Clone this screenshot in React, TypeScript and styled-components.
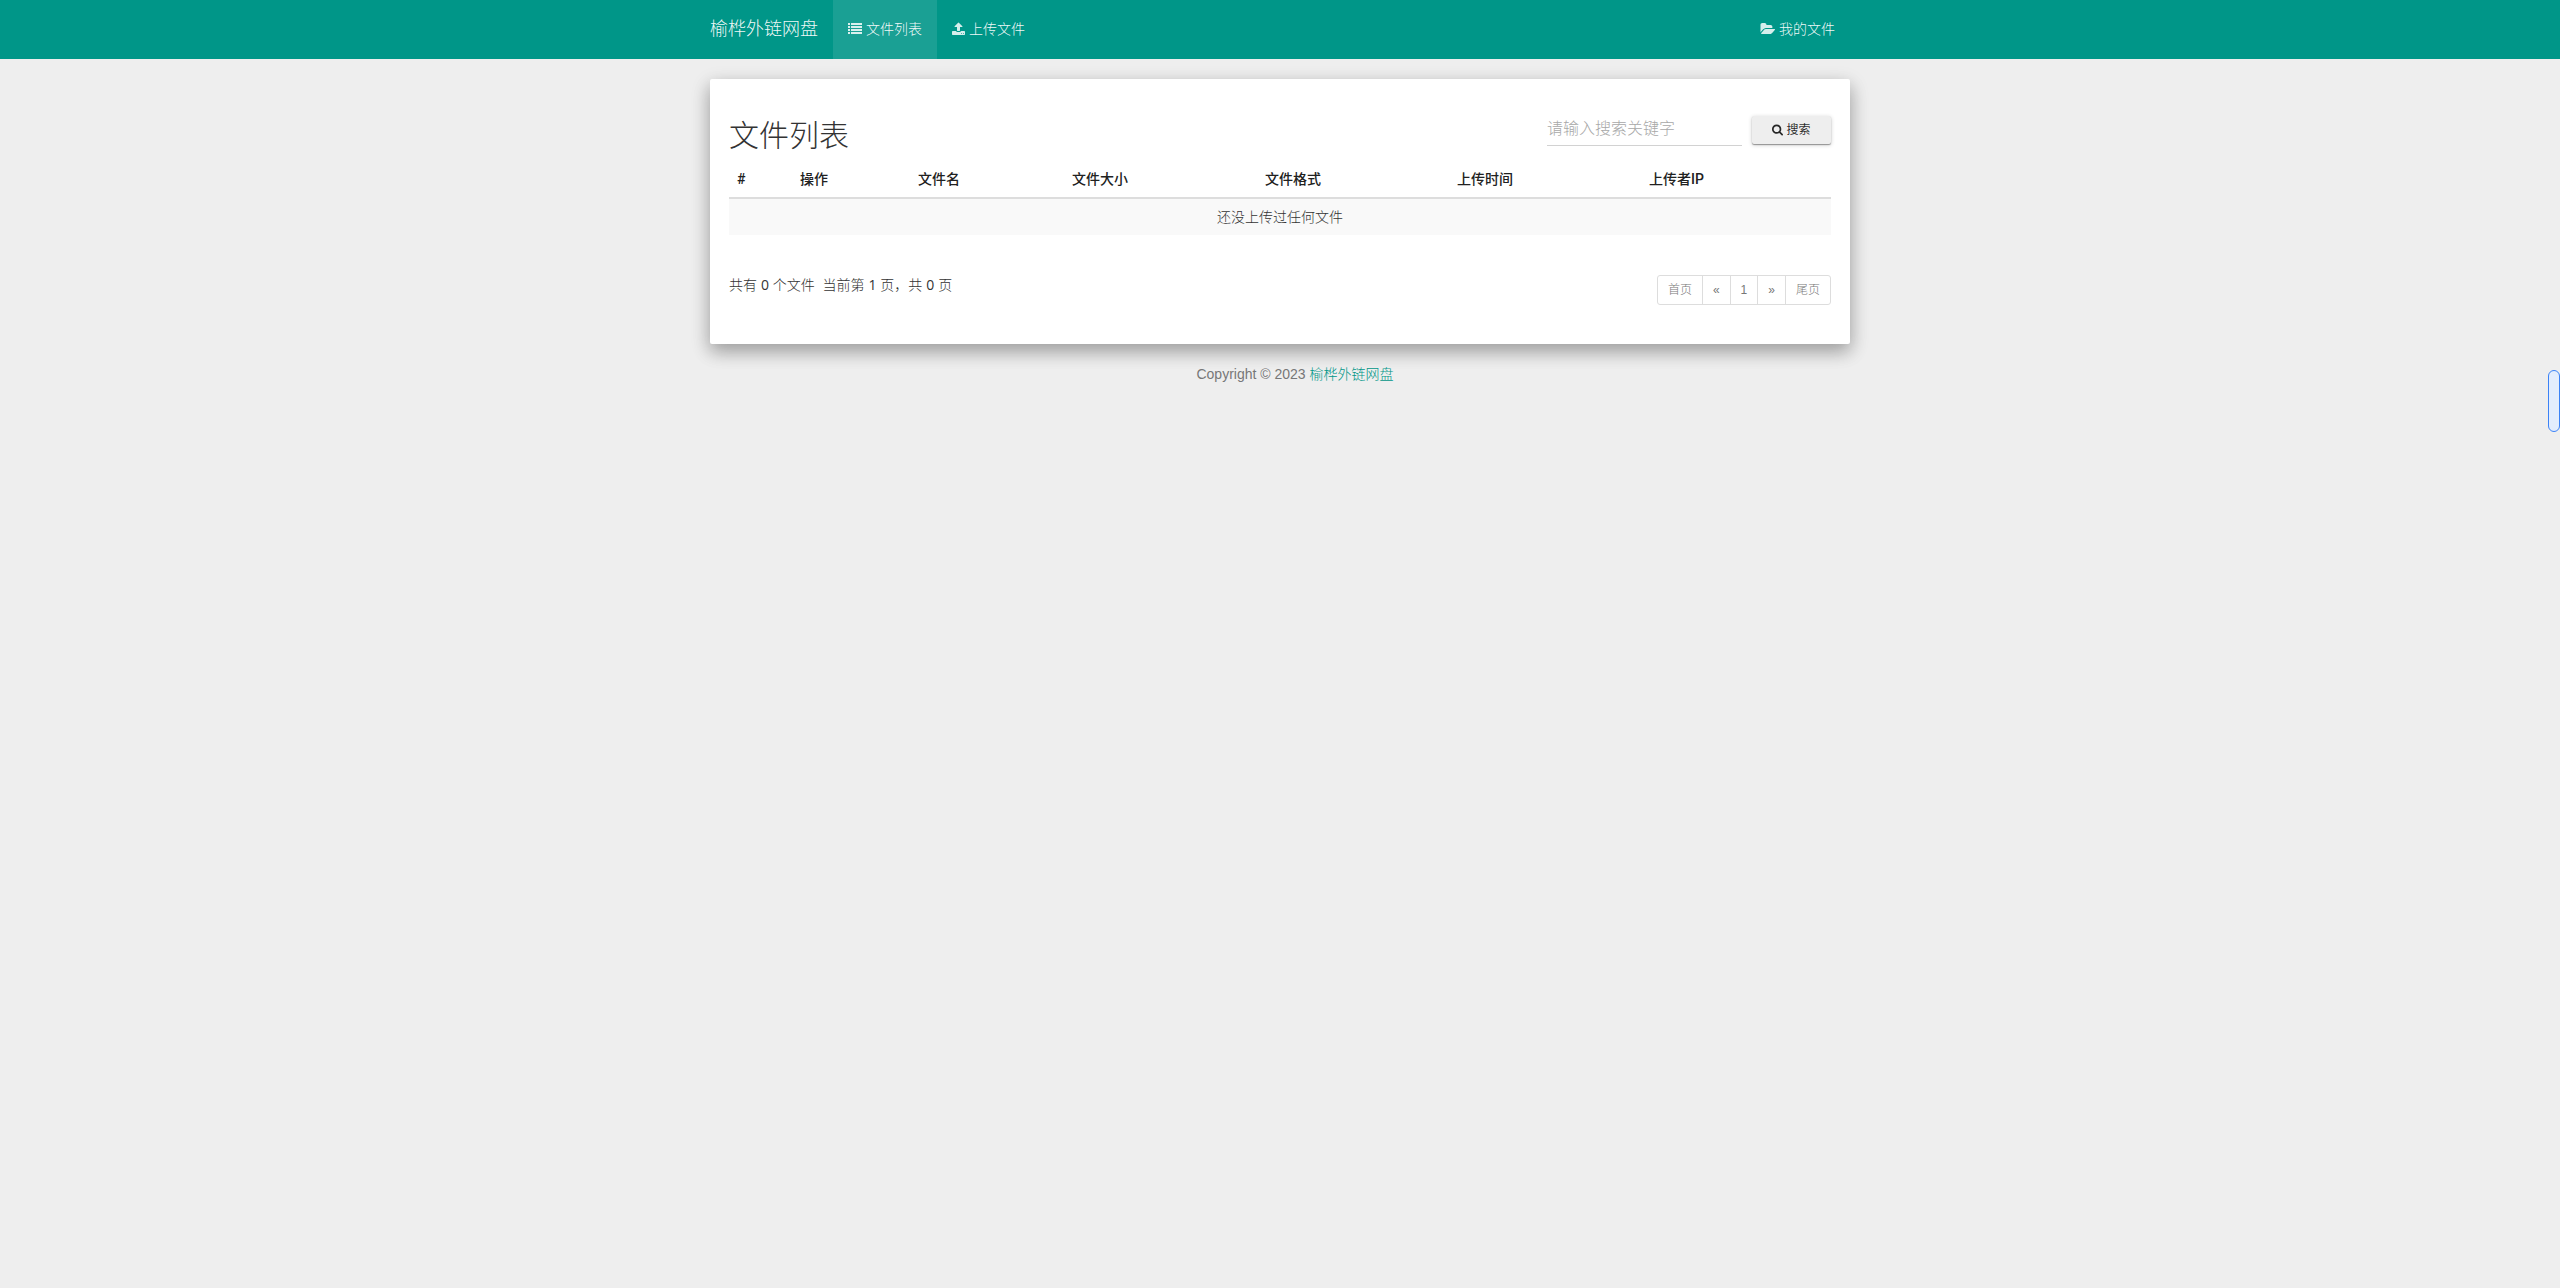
import React from 'react';
import styled, { createGlobalStyle } from 'styled-components';

const GlobalStyle = createGlobalStyle`
  * { box-sizing: border-box; }
  body {
    margin: 0;
    background: #eeeeee;
    color: #333333;
    font-family: "Liberation Sans", "Noto Sans CJK SC", sans-serif;
    font-size: 14px;
    font-weight: 300;
    line-height: 20px;
  }
  a { text-decoration: none; }
`;

const Container = styled.div`
  width: 100%;
  max-width: 1170px;
  margin: 0 auto;
  padding: 0 15px;
`;

const Navbar = styled.header`
  background: #009688;
`;

const NavRow = styled.nav`
  display: flex;
  align-items: stretch;
  min-height: 59px;
`;

const Brand = styled.a`
  display: flex;
  align-items: center;
  padding: 0 15px 1px 0;
  color: rgba(255, 255, 255, 0.95);
  font-size: 18px;
`;

const Glyph = styled.svg`
  flex: none;
  display: block;
  fill: currentColor;
`;

const NavLink = styled.a<{ $active?: boolean; $end?: boolean }>`
  display: flex;
  align-items: center;
  gap: 4px;
  padding: 0 15px 1px;
  margin-left: ${(p) => (p.$end ? 'auto' : '0')};
  background: ${(p) => (p.$active ? 'rgba(255, 255, 255, 0.1)' : 'transparent')};
  color: rgba(255, 255, 255, 0.95);
  ${Glyph} { fill: rgba(255, 255, 255, 0.84); }
`;

const Card = styled.main`
  margin-top: 20px;
  padding: 19px;
  min-height: 265px;
  border-radius: 2px;
  background: #ffffff;
  box-shadow: 0 8px 17px 0 rgba(0, 0, 0, 0.2), 0 6px 20px 0 rgba(0, 0, 0, 0.19);
`;

const Heading = styled.div`
  display: flex;
  justify-content: space-between;
  align-items: flex-end;
  height: 70px;
`;

const Title = styled.h1`
  margin: 0 0 15px;
  font-size: 30px;
  line-height: 34px;
  font-weight: 300;
`;

const SearchForm = styled.form`
  display: flex;
  align-items: center;
  gap: 10px;
  margin-bottom: 22px;
`;

const SearchInput = styled.input`
  width: 195px;
  height: 32px;
  padding: 0 0 2px;
  border: 0;
  border-bottom: 1px solid #d2d2d2;
  background: transparent;
  color: #333333;
  font: inherit;
  font-size: 16px;
  &::placeholder { color: #a8a8a8; opacity: 1; }
`;

const SearchButton = styled.button`
  display: flex;
  justify-content: center;
  align-items: center;
  gap: 3px;
  width: 79px;
  height: 28px;
  padding: 0;
  border: 0;
  border-radius: 2px;
  background: #eeeeee;
  color: rgba(0, 0, 0, 0.84);
  font: inherit;
  font-size: 12px;
  font-weight: 400;
  box-shadow: 0 1px 4px 0 rgba(0, 0, 0, 0.2), 0 1px 1px 0 rgba(0, 0, 0, 0.35);
`;

const FileTable = styled.table`
  width: 100%;
  table-layout: fixed;
  border-collapse: separate;
  border-spacing: 0;
`;

const HeadCell = styled.th`
  padding: 1px 8px 8px;
  border-bottom: 2px solid #dddddd;
  text-align: left;
  font-family: Roboto, "Noto Sans CJK SC", sans-serif;
  font-weight: 500;
  color: #212121;
`;

const EmptyCell = styled.td`
  height: 36px;
  padding: 8px;
  background: #f9f9f9;
  text-align: center;
`;

const TableFooter = styled.div`
  display: flex;
  justify-content: space-between;
  align-items: flex-start;
  padding-top: 40px;
`;

const Summary = styled.p`
  margin: 0;
  white-space: pre;
  b { font-weight: 400; font-family: "Open Sans", "Noto Sans", sans-serif; }
`;

const Pagination = styled.ul`
  display: flex;
  margin: 0;
  padding: 0;
  list-style: none;
  border: 1px solid #dddddd;
  border-radius: 3px;
  font-size: 12px;
  li + li { border-left: 1px solid #dddddd; }
`;

const PageLink = styled.a`
  display: block;
  padding: 5px 10px;
  line-height: 18px;
  color: #777777;
`;

const Copyright = styled.footer`
  padding: 20px 0 20px 30px;
  text-align: center;
  color: #777777;
  a { color: #009688; }
`;

const SideHandle = styled.div`
  position: fixed;
  top: 370px;
  right: 0;
  width: 12px;
  height: 62px;
  border: 1px solid #3b82f6;
  border-radius: 6px;
  background: #e3edfd;
`;

const ListIcon = () => (
  <Glyph width="14" height="14" viewBox="0 0 14 14" aria-hidden="true">
    {[1, 4, 7, 10].map((y) => (
      <g key={y}>
        <rect x="0" y={y} width="2" height="2" />
        <rect x="3" y={y} width="11" height="2" />
      </g>
    ))}
  </Glyph>
);

const UploadIcon = () => (
  <Glyph width="13" height="14" viewBox="64 0 1664 1792" aria-hidden="true">
    <path d="M1344 1472q0-26-19-45t-45-19-45 19-19 45 19 45 45 19 45-19 19-45zm256 0q0-26-19-45t-45-19-45 19-19 45 19 45 45 19 45-19 19-45zm128-224v320q0 40-28 68t-68 28h-1472q-40 0-68-28t-28-68v-320q0-40 28-68t68-28h427q21 56 70.5 92t110.5 36h256q61 0 110.5-36t70.5-92h427q40 0 68 28t28 68zm-325-648q-17 40-59 40h-256v448q0 26-19 45t-45 19h-256q-26 0-45-19t-19-45v-448h-256q-42 0-59-40-17-39 14-69l448-448q18-19 45-19t45 19l448 448q31 30 14 69z" />
  </Glyph>
);

const FolderIcon = () => (
  <Glyph width="15" height="14" viewBox="0 0 1943 1792" aria-hidden="true">
    <path d="M1943 952q0 31-31 66l-336 396q-43 51-120.5 86.5t-143.5 35.5h-1088q-34 0-60.5-13t-26.5-43q0-31 31-66l336-396q43-51 120.5-86.5t143.5-35.5h1088q34 0 60.5 13t26.5 43zm-343-344v160h-832q-94 0-197 47.5t-164 119.5l-337 396-5 6q0-4-.5-12.5t-.5-12.5v-960q0-92 66-158t158-66h320q92 0 158 66t66 158v32h544q92 0 158 66t66 158z" />
  </Glyph>
);

const SearchIcon = () => (
  <Glyph width="11" height="12" viewBox="64 128 1664 1664" aria-hidden="true">
    <path d="M1216 832q0-185-131.5-316.5t-316.5-131.5-316.5 131.5-131.5 316.5 131.5 316.5 316.5 131.5 316.5-131.5 131.5-316.5zm512 832q0 52-38 90t-90 38q-54 0-90-38l-343-342q-179 124-399 124-143 0-273.5-55.5t-225-150-150-225-55.5-273.5 55.5-273.5 150-225 225-150 273.5-55.5 273.5 55.5 225 150 150 225 55.5 273.5q0 220-124 399l343 343q37 37 37 90z" />
  </Glyph>
);

const columns = [
  { name: '#', share: 63 },
  { name: '操作', share: 118 },
  { name: '文件名', share: 154 },
  { name: '文件大小', share: 193 },
  { name: '文件格式', share: 192 },
  { name: '上传时间', share: 192 },
  { name: '上传者IP', share: 190 },
];
const total = columns.reduce((sum, c) => sum + c.share, 0);

const pages = ['首页', '«', '1', '»', '尾页'];

export default function App() {
  return (
    <>
      <GlobalStyle />
      <Navbar>
        <Container>
          <NavRow>
            <Brand href="#">榆桦外链网盘</Brand>
            <NavLink href="#" $active><ListIcon />文件列表</NavLink>
            <NavLink href="#"><UploadIcon />上传文件</NavLink>
            <NavLink href="#" $end><FolderIcon />我的文件</NavLink>
          </NavRow>
        </Container>
      </Navbar>
      <Container>
        <Card>
          <Heading>
            <Title>文件列表</Title>
            <SearchForm>
              <SearchInput type="text" placeholder="请输入搜索关键字" aria-label="请输入搜索关键字" />
              <SearchButton type="submit"><SearchIcon />搜索</SearchButton>
            </SearchForm>
          </Heading>
          <FileTable>
            <colgroup>
              {columns.map((c) => (
                <col key={c.name} style={{ width: `${(c.share / total) * 100}%` }} />
              ))}
            </colgroup>
            <thead>
              <tr>{columns.map((c) => <HeadCell key={c.name} scope="col">{c.name}</HeadCell>)}</tr>
            </thead>
            <tbody>
              <tr><EmptyCell colSpan={7}>还没上传过任何文件</EmptyCell></tr>
            </tbody>
          </FileTable>
          <TableFooter>
            <Summary>共有 <b>0</b> 个文件{'  '}当前第 <b>1</b> 页，共 <b>0</b> 页</Summary>
            <Pagination>
              {pages.map((p) => (
                <li key={p}><PageLink href="#">{p}</PageLink></li>
              ))}
            </Pagination>
          </TableFooter>
        </Card>
        <Copyright>Copyright © 2023 <a href="#">榆桦外链网盘</a></Copyright>
      </Container>
      <SideHandle />
    </>
  );
}
